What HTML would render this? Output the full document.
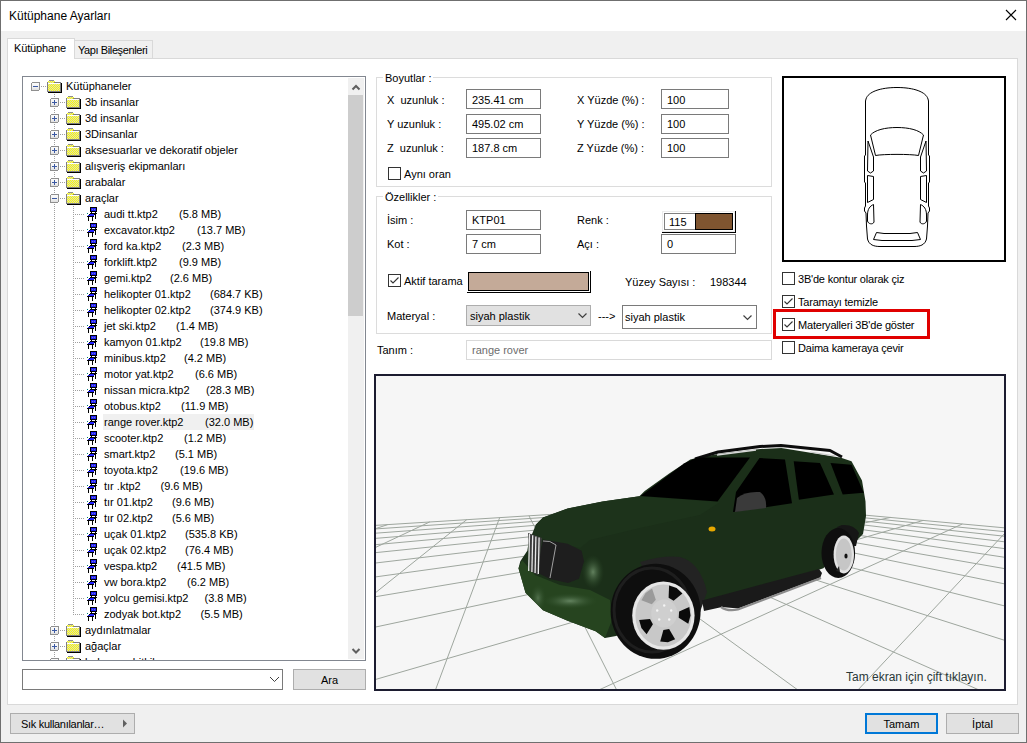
<!DOCTYPE html>
<html><head><meta charset="utf-8">
<style>
*{box-sizing:border-box;margin:0;padding:0}
html,body{width:1027px;height:743px;overflow:hidden;background:#f0f0f0;font-family:"Liberation Sans",sans-serif;color:#000}
.a{position:absolute}
.tt{position:absolute;font-size:11px;line-height:13px;white-space:pre}
.t12{position:absolute;font-size:12px;line-height:15px;white-space:pre}
.ic{position:absolute;shape-rendering:crispEdges}
.vd{position:absolute;width:1px;background-image:linear-gradient(#a0a0a0 50%,transparent 50%);background-size:1px 2px}
.hd{position:absolute;height:1px;background-image:linear-gradient(90deg,#a0a0a0 50%,transparent 50%);background-size:2px 1px}
.ed{position:absolute;background:#fff;border:1px solid #7a7a7a}
.btn{position:absolute;background:#e1e1e1;border:1px solid #adadad;font-size:12px;text-align:center}
.gb{position:absolute;border:1px solid #dcdcdc}
.cb{position:absolute;width:13px;height:13px;border:1px solid #333;background:#fff}
</style></head><body>
<svg width="0" height="0" style="position:absolute">
<defs>
<pattern id="dith" width="2" height="2" patternUnits="userSpaceOnUse"><rect width="2" height="2" fill="#d8d8c0"/><rect width="1" height="1" fill="#ffff00"/><rect x="1" y="1" width="1" height="1" fill="#ffff00"/></pattern>
<pattern id="bdith" width="2" height="2" patternUnits="userSpaceOnUse"><rect width="2" height="2" fill="#2020ff"/><rect width="1" height="1" fill="#8080c0"/></pattern>
<linearGradient id="bxg" x1="0" y1="0" x2="0" y2="1"><stop offset="0" stop-color="#fdfdfd"/><stop offset="0.6" stop-color="#f0f0f0"/><stop offset="1" stop-color="#dcdcdc"/></linearGradient>
<g id="fold">
 <rect x="2" y="0" width="5" height="1" fill="#909090"/>
 <rect x="1" y="1" width="7" height="2" fill="url(#dith)"/>
 <rect x="0" y="2" width="1" height="10" fill="#808080"/>
 <rect x="7" y="2" width="7" height="1" fill="#808080"/>
 <rect x="0" y="11" width="14" height="1" fill="#808080"/>
 <rect x="13" y="2" width="1" height="10" fill="#808080"/>
 <rect x="1" y="3" width="12" height="8" fill="url(#dith)"/>
 <rect x="1" y="3" width="12" height="1" fill="#fff"/>
 <rect x="14" y="3" width="1" height="10" fill="#000"/>
 <rect x="1" y="12" width="14" height="1" fill="#000"/>
</g>
<g id="minus">
 <rect x="0.5" y="0.5" width="8" height="8" rx="1.5" fill="url(#bxg)" stroke="#8f8f8f"/>
 <rect x="2" y="4" width="5" height="1" fill="#3b59a3"/>
</g>
<g id="plus">
 <rect x="0.5" y="0.5" width="8" height="8" rx="1.5" fill="url(#bxg)" stroke="#8f8f8f"/>
 <rect x="2" y="4" width="5" height="1" fill="#3b59a3"/>
 <rect x="4" y="2" width="1" height="5" fill="#3b59a3"/>
</g>
<g id="chair">
 <rect x="4" y="0" width="7" height="5" fill="#000"/>
 <rect x="5" y="1" width="5" height="3" fill="url(#bdith)"/>
 <rect x="5" y="5" width="1" height="1" fill="#000"/>
 <rect x="9" y="5" width="1" height="1" fill="#000"/>
 <rect x="4" y="6" width="7" height="1" fill="#000"/>
 <rect x="3" y="7" width="6" height="1" fill="#000"/>
 <rect x="4" y="7" width="4" height="1" fill="#2020ff"/>
 <rect x="2" y="8" width="6" height="1" fill="#2020ff"/>
 <rect x="1" y="9" width="7" height="1" fill="#000"/>
 <rect x="2" y="9" width="1" height="5" fill="#000"/>
 <rect x="6" y="9" width="1" height="5" fill="#000"/>
 <rect x="9" y="6" width="1" height="6" fill="#000"/>
 <rect x="1" y="6" width="1" height="1" fill="#008080"/>
</g>
</defs></svg>

<!-- window frame -->
<div class="a" style="left:0;top:0;width:1027px;height:743px;border:1px solid #6f6f6f"></div>
<div class="a" style="left:1px;top:1px;width:1025px;height:30px;background:#fff"></div>
<div class="t12" style="left:9px;top:9px">Kütüphane Ayarları</div>
<svg class="a" style="left:1005px;top:9px" width="12" height="12" viewBox="0 0 12 12"><path d="M1 1L11 11M11 1L1 11" stroke="#000" stroke-width="1.1"/></svg>

<!-- tabs -->
<div class="a" style="left:7px;top:58px;width:1011px;height:647px;background:#fff;border:1px solid #d9d9d9"></div>
<div class="a" style="left:74px;top:40px;width:79px;height:18px;background:#f0f0f0;border:1px solid #d9d9d9;border-bottom:none"></div>
<div class="a" style="left:7px;top:38px;width:68px;height:21px;background:#fff;border:1px solid #d9d9d9;border-bottom:none"></div>
<div class="tt" style="left:14px;top:42px;letter-spacing:-0.15px">Kütüphane</div>
<div class="tt" style="left:78px;top:44px;letter-spacing:-0.4px">Yapı Bileşenleri</div>

<!-- tree -->
<div class="a" style="left:22px;top:76px;width:344px;height:585px;border:1px solid #828790;background:#fff;overflow:hidden">
</div>
<div class="a" style="left:23px;top:77px;width:342px;height:583px;overflow:hidden">
<div class="a" style="left:-23px;top:-77px;width:400px;height:700px">
<div class="hd" style="left:41px;top:86px;width:6px"></div>
<div class="vd" style="left:54px;top:94px;height:568px"></div>
<div class="hd" style="left:60px;top:102px;width:6px"></div>
<div class="hd" style="left:60px;top:118px;width:6px"></div>
<div class="hd" style="left:60px;top:134px;width:6px"></div>
<div class="hd" style="left:60px;top:150px;width:6px"></div>
<div class="hd" style="left:60px;top:166px;width:6px"></div>
<div class="hd" style="left:60px;top:182px;width:6px"></div>
<div class="hd" style="left:60px;top:198px;width:6px"></div>
<div class="hd" style="left:60px;top:630px;width:6px"></div>
<div class="hd" style="left:60px;top:646px;width:6px"></div>
<div class="hd" style="left:60px;top:662px;width:6px"></div>
<div class="vd" style="left:73px;top:206px;height:409px"></div>
<div class="hd" style="left:75px;top:214px;width:10px"></div>
<div class="hd" style="left:75px;top:230px;width:10px"></div>
<div class="hd" style="left:75px;top:246px;width:10px"></div>
<div class="hd" style="left:75px;top:262px;width:10px"></div>
<div class="hd" style="left:75px;top:278px;width:10px"></div>
<div class="hd" style="left:75px;top:294px;width:10px"></div>
<div class="hd" style="left:75px;top:310px;width:10px"></div>
<div class="hd" style="left:75px;top:326px;width:10px"></div>
<div class="hd" style="left:75px;top:342px;width:10px"></div>
<div class="hd" style="left:75px;top:358px;width:10px"></div>
<div class="hd" style="left:75px;top:374px;width:10px"></div>
<div class="hd" style="left:75px;top:390px;width:10px"></div>
<div class="hd" style="left:75px;top:406px;width:10px"></div>
<div class="hd" style="left:75px;top:422px;width:10px"></div>
<div class="hd" style="left:75px;top:438px;width:10px"></div>
<div class="hd" style="left:75px;top:454px;width:10px"></div>
<div class="hd" style="left:75px;top:470px;width:10px"></div>
<div class="hd" style="left:75px;top:486px;width:10px"></div>
<div class="hd" style="left:75px;top:502px;width:10px"></div>
<div class="hd" style="left:75px;top:518px;width:10px"></div>
<div class="hd" style="left:75px;top:534px;width:10px"></div>
<div class="hd" style="left:75px;top:550px;width:10px"></div>
<div class="hd" style="left:75px;top:566px;width:10px"></div>
<div class="hd" style="left:75px;top:582px;width:10px"></div>
<div class="hd" style="left:75px;top:598px;width:10px"></div>
<div class="hd" style="left:75px;top:614px;width:10px"></div>
<svg class="ic" style="left:31px;top:82px" width="9" height="9" viewBox="0 0 9 9"><use href="#minus"/></svg>
<svg class="ic" style="left:47px;top:80px" width="16" height="14" viewBox="0 0 16 14"><use href="#fold"/></svg>
<div class="tt" style="left:66px;top:80px">Kütüphaneler</div>
<svg class="ic" style="left:50px;top:98px" width="9" height="9" viewBox="0 0 9 9"><use href="#plus"/></svg>
<svg class="ic" style="left:66px;top:96px" width="16" height="14" viewBox="0 0 16 14"><use href="#fold"/></svg>
<div class="tt" style="left:85px;top:96px">3b insanlar</div>
<svg class="ic" style="left:50px;top:114px" width="9" height="9" viewBox="0 0 9 9"><use href="#plus"/></svg>
<svg class="ic" style="left:66px;top:112px" width="16" height="14" viewBox="0 0 16 14"><use href="#fold"/></svg>
<div class="tt" style="left:85px;top:112px">3d insanlar</div>
<svg class="ic" style="left:50px;top:130px" width="9" height="9" viewBox="0 0 9 9"><use href="#plus"/></svg>
<svg class="ic" style="left:66px;top:128px" width="16" height="14" viewBox="0 0 16 14"><use href="#fold"/></svg>
<div class="tt" style="left:85px;top:128px">3Dinsanlar</div>
<svg class="ic" style="left:50px;top:146px" width="9" height="9" viewBox="0 0 9 9"><use href="#plus"/></svg>
<svg class="ic" style="left:66px;top:144px" width="16" height="14" viewBox="0 0 16 14"><use href="#fold"/></svg>
<div class="tt" style="left:85px;top:144px">aksesuarlar ve dekoratif objeler</div>
<svg class="ic" style="left:50px;top:162px" width="9" height="9" viewBox="0 0 9 9"><use href="#plus"/></svg>
<svg class="ic" style="left:66px;top:160px" width="16" height="14" viewBox="0 0 16 14"><use href="#fold"/></svg>
<div class="tt" style="left:85px;top:160px">alışveriş ekipmanları</div>
<svg class="ic" style="left:50px;top:178px" width="9" height="9" viewBox="0 0 9 9"><use href="#plus"/></svg>
<svg class="ic" style="left:66px;top:176px" width="16" height="14" viewBox="0 0 16 14"><use href="#fold"/></svg>
<div class="tt" style="left:85px;top:176px">arabalar</div>
<svg class="ic" style="left:50px;top:194px" width="9" height="9" viewBox="0 0 9 9"><use href="#minus"/></svg>
<svg class="ic" style="left:66px;top:192px" width="16" height="14" viewBox="0 0 16 14"><use href="#fold"/></svg>
<div class="tt" style="left:85px;top:192px">araçlar</div>
<svg class="ic" style="left:86px;top:207px" width="12" height="14" viewBox="0 0 12 14"><use href="#chair"/></svg>
<div class="tt" style="left:104px;top:208px">audi tt.ktp2</div>
<div class="tt" style="left:179px;top:208px">(5.8 MB)</div>
<svg class="ic" style="left:86px;top:223px" width="12" height="14" viewBox="0 0 12 14"><use href="#chair"/></svg>
<div class="tt" style="left:104px;top:224px">excavator.ktp2</div>
<div class="tt" style="left:197px;top:224px">(13.7 MB)</div>
<svg class="ic" style="left:86px;top:239px" width="12" height="14" viewBox="0 0 12 14"><use href="#chair"/></svg>
<div class="tt" style="left:104px;top:240px">ford ka.ktp2</div>
<div class="tt" style="left:182px;top:240px">(2.3 MB)</div>
<svg class="ic" style="left:86px;top:255px" width="12" height="14" viewBox="0 0 12 14"><use href="#chair"/></svg>
<div class="tt" style="left:104px;top:256px">forklift.ktp2</div>
<div class="tt" style="left:179px;top:256px">(9.9 MB)</div>
<svg class="ic" style="left:86px;top:271px" width="12" height="14" viewBox="0 0 12 14"><use href="#chair"/></svg>
<div class="tt" style="left:104px;top:272px">gemi.ktp2</div>
<div class="tt" style="left:170px;top:272px">(2.6 MB)</div>
<svg class="ic" style="left:86px;top:287px" width="12" height="14" viewBox="0 0 12 14"><use href="#chair"/></svg>
<div class="tt" style="left:104px;top:288px">helikopter 01.ktp2</div>
<div class="tt" style="left:210px;top:288px">(684.7 KB)</div>
<svg class="ic" style="left:86px;top:303px" width="12" height="14" viewBox="0 0 12 14"><use href="#chair"/></svg>
<div class="tt" style="left:104px;top:304px">helikopter 02.ktp2</div>
<div class="tt" style="left:210px;top:304px">(374.9 KB)</div>
<svg class="ic" style="left:86px;top:319px" width="12" height="14" viewBox="0 0 12 14"><use href="#chair"/></svg>
<div class="tt" style="left:104px;top:320px">jet ski.ktp2</div>
<div class="tt" style="left:176px;top:320px">(1.4 MB)</div>
<svg class="ic" style="left:86px;top:335px" width="12" height="14" viewBox="0 0 12 14"><use href="#chair"/></svg>
<div class="tt" style="left:104px;top:336px">kamyon 01.ktp2</div>
<div class="tt" style="left:200px;top:336px">(19.8 MB)</div>
<svg class="ic" style="left:86px;top:351px" width="12" height="14" viewBox="0 0 12 14"><use href="#chair"/></svg>
<div class="tt" style="left:104px;top:352px">minibus.ktp2</div>
<div class="tt" style="left:184px;top:352px">(4.2 MB)</div>
<svg class="ic" style="left:86px;top:367px" width="12" height="14" viewBox="0 0 12 14"><use href="#chair"/></svg>
<div class="tt" style="left:104px;top:368px">motor yat.ktp2</div>
<div class="tt" style="left:195px;top:368px">(6.6 MB)</div>
<svg class="ic" style="left:86px;top:383px" width="12" height="14" viewBox="0 0 12 14"><use href="#chair"/></svg>
<div class="tt" style="left:104px;top:384px">nissan micra.ktp2</div>
<div class="tt" style="left:206px;top:384px">(28.3 MB)</div>
<svg class="ic" style="left:86px;top:399px" width="12" height="14" viewBox="0 0 12 14"><use href="#chair"/></svg>
<div class="tt" style="left:104px;top:400px">otobus.ktp2</div>
<div class="tt" style="left:181px;top:400px">(11.9 MB)</div>
<div style="position:absolute;left:103px;top:414px;width:151px;height:16px;background:#f0f0f0"></div>
<svg class="ic" style="left:86px;top:415px" width="12" height="14" viewBox="0 0 12 14"><use href="#chair"/></svg>
<div class="tt" style="left:104px;top:416px">range rover.ktp2</div>
<div class="tt" style="left:205px;top:416px">(32.0 MB)</div>
<svg class="ic" style="left:86px;top:431px" width="12" height="14" viewBox="0 0 12 14"><use href="#chair"/></svg>
<div class="tt" style="left:104px;top:432px">scooter.ktp2</div>
<div class="tt" style="left:184px;top:432px">(1.2 MB)</div>
<svg class="ic" style="left:86px;top:447px" width="12" height="14" viewBox="0 0 12 14"><use href="#chair"/></svg>
<div class="tt" style="left:104px;top:448px">smart.ktp2</div>
<div class="tt" style="left:175px;top:448px">(5.1 MB)</div>
<svg class="ic" style="left:86px;top:463px" width="12" height="14" viewBox="0 0 12 14"><use href="#chair"/></svg>
<div class="tt" style="left:104px;top:464px">toyota.ktp2</div>
<div class="tt" style="left:180px;top:464px">(19.6 MB)</div>
<svg class="ic" style="left:86px;top:479px" width="12" height="14" viewBox="0 0 12 14"><use href="#chair"/></svg>
<div class="tt" style="left:104px;top:480px">tır .ktp2</div>
<div class="tt" style="left:160.5px;top:480px">(9.6 MB)</div>
<svg class="ic" style="left:86px;top:495px" width="12" height="14" viewBox="0 0 12 14"><use href="#chair"/></svg>
<div class="tt" style="left:104px;top:496px">tır 01.ktp2</div>
<div class="tt" style="left:172px;top:496px">(9.6 MB)</div>
<svg class="ic" style="left:86px;top:511px" width="12" height="14" viewBox="0 0 12 14"><use href="#chair"/></svg>
<div class="tt" style="left:104px;top:512px">tır 02.ktp2</div>
<div class="tt" style="left:172px;top:512px">(5.6 MB)</div>
<svg class="ic" style="left:86px;top:527px" width="12" height="14" viewBox="0 0 12 14"><use href="#chair"/></svg>
<div class="tt" style="left:104px;top:528px">uçak 01.ktp2</div>
<div class="tt" style="left:185px;top:528px">(535.8 KB)</div>
<svg class="ic" style="left:86px;top:543px" width="12" height="14" viewBox="0 0 12 14"><use href="#chair"/></svg>
<div class="tt" style="left:104px;top:544px">uçak 02.ktp2</div>
<div class="tt" style="left:185px;top:544px">(76.4 MB)</div>
<svg class="ic" style="left:86px;top:559px" width="12" height="14" viewBox="0 0 12 14"><use href="#chair"/></svg>
<div class="tt" style="left:104px;top:560px">vespa.ktp2</div>
<div class="tt" style="left:177px;top:560px">(41.5 MB)</div>
<svg class="ic" style="left:86px;top:575px" width="12" height="14" viewBox="0 0 12 14"><use href="#chair"/></svg>
<div class="tt" style="left:104px;top:576px">vw bora.ktp2</div>
<div class="tt" style="left:187px;top:576px">(6.2 MB)</div>
<svg class="ic" style="left:86px;top:591px" width="12" height="14" viewBox="0 0 12 14"><use href="#chair"/></svg>
<div class="tt" style="left:104px;top:592px">yolcu gemisi.ktp2</div>
<div class="tt" style="left:204.5px;top:592px">(3.8 MB)</div>
<svg class="ic" style="left:86px;top:607px" width="12" height="14" viewBox="0 0 12 14"><use href="#chair"/></svg>
<div class="tt" style="left:104px;top:608px">zodyak bot.ktp2</div>
<div class="tt" style="left:200.6px;top:608px">(5.5 MB)</div>
<svg class="ic" style="left:50px;top:626px" width="9" height="9" viewBox="0 0 9 9"><use href="#plus"/></svg>
<svg class="ic" style="left:66px;top:624px" width="16" height="14" viewBox="0 0 16 14"><use href="#fold"/></svg>
<div class="tt" style="left:85px;top:624px">aydınlatmalar</div>
<svg class="ic" style="left:50px;top:642px" width="9" height="9" viewBox="0 0 9 9"><use href="#plus"/></svg>
<svg class="ic" style="left:66px;top:640px" width="16" height="14" viewBox="0 0 16 14"><use href="#fold"/></svg>
<div class="tt" style="left:85px;top:640px">ağaçlar</div>
<svg class="ic" style="left:50px;top:658px" width="9" height="9" viewBox="0 0 9 9"><use href="#plus"/></svg>
<svg class="ic" style="left:66px;top:656px" width="16" height="14" viewBox="0 0 16 14"><use href="#fold"/></svg>
<div class="tt" style="left:85px;top:656px">bahçe ve bitkiler</div>
</div>
</div>
<!-- scrollbar -->
<div class="a" style="left:348px;top:78px;width:16px;height:581px;background:#f0f0f0"></div>
<div class="a" style="left:348px;top:95px;width:15px;height:221px;background:#cdcdcd"></div>
<svg class="a" style="left:350px;top:82px" width="12" height="10" viewBox="0 0 12 10"><path d="M2.5 7.5L6 4L9.5 7.5" stroke="#606060" stroke-width="2" fill="none"/></svg>
<svg class="a" style="left:350px;top:646px" width="12" height="10" viewBox="0 0 12 10"><path d="M2.5 3L6 6.5L9.5 3" stroke="#606060" stroke-width="2" fill="none"/></svg>

<!-- search combo + Ara -->
<div class="ed" style="left:22px;top:669px;width:261px;height:21px"></div>
<svg class="a" style="left:269px;top:675px" width="11" height="8" viewBox="0 0 11 8"><path d="M1 2L5.5 6.5L10 2" stroke="#404040" stroke-width="1" fill="none"/></svg>
<div class="btn" style="left:293px;top:669px;width:73px;height:21px;line-height:20px;font-size:11px">Ara</div>

<!-- Boyutlar group -->
<div class="gb" style="left:376px;top:77px;width:396px;height:110px"></div>
<div class="tt" style="left:383px;top:72px;background:#fff;padding:0 2px">Boyutlar :</div>
<div class="tt" style="left:387px;top:94px">X  uzunluk :</div>
<div class="tt" style="left:387px;top:118px">Y uzunluk :</div>
<div class="tt" style="left:387px;top:142px">Z  uzunluk :</div>
<div class="ed" style="left:466px;top:89px;width:75px;height:20px"></div>
<div class="ed" style="left:466px;top:114px;width:75px;height:20px"></div>
<div class="ed" style="left:466px;top:138px;width:75px;height:20px"></div>
<div class="tt" style="left:472px;top:94px">235.41 cm</div>
<div class="tt" style="left:472px;top:118px">495.02 cm</div>
<div class="tt" style="left:472px;top:142px">187.8 cm</div>
<div class="tt" style="left:577px;top:94px">X Yüzde (%) :</div>
<div class="tt" style="left:577px;top:118px">Y Yüzde (%) :</div>
<div class="tt" style="left:577px;top:142px">Z Yüzde (%) :</div>
<div class="ed" style="left:661px;top:89px;width:68px;height:20px"></div>
<div class="ed" style="left:661px;top:114px;width:68px;height:20px"></div>
<div class="ed" style="left:661px;top:138px;width:68px;height:20px"></div>
<div class="tt" style="left:667px;top:94px">100</div>
<div class="tt" style="left:667px;top:118px">100</div>
<div class="tt" style="left:667px;top:142px">100</div>
<div class="cb" style="left:388px;top:167px"></div>
<div class="tt" style="left:404px;top:168px">Aynı oran</div>

<!-- Ozellikler group -->
<div class="gb" style="left:376px;top:196px;width:396px;height:138px"></div>
<div class="tt" style="left:383px;top:191px;background:#fff;padding:0 2px">Özellikler :</div>
<div class="tt" style="left:387px;top:214px">İsim :</div>
<div class="tt" style="left:387px;top:238px">Kot :</div>
<div class="ed" style="left:466px;top:210px;width:75px;height:20px"></div>
<div class="ed" style="left:466px;top:234px;width:75px;height:20px"></div>
<div class="tt" style="left:472px;top:214px">KTP01</div>
<div class="tt" style="left:472px;top:238px">7 cm</div>
<div class="tt" style="left:577px;top:214px">Renk :</div>
<div class="tt" style="left:577px;top:238px">Açı :</div>
<div class="a" style="left:662px;top:211px;width:73px;height:21px;border:1px solid #ececec;background:#fff"></div>
<div class="a" style="left:664px;top:213px;width:69px;height:17px;border:1px solid #808080;background:#fff"></div>
<div class="a" style="left:695px;top:213px;width:38px;height:17px;background:#7f5530;border:1px solid #000"></div>
<div class="a" style="left:735px;top:211px;width:1px;height:22px;background:#000"></div>
<div class="a" style="left:662px;top:232px;width:74px;height:1px;background:#000"></div>
<div class="tt" style="left:669px;top:216px">115</div>
<div class="ed" style="left:661px;top:234px;width:75px;height:20px"></div>
<div class="tt" style="left:667px;top:238px">0</div>
<div class="cb" style="left:388px;top:274px"></div>
<svg class="a" style="left:389px;top:275px" width="11" height="11" viewBox="0 0 11 11"><path d="M1.5 5.5L4 8L9.5 2.5" stroke="#333" stroke-width="1.1" fill="none"/></svg>
<div class="tt" style="left:404px;top:275px">Aktif tarama</div>
<div class="a" style="left:468px;top:272px;width:121px;height:19px;border:1px solid #000;background:#c4aa98"></div>
<div class="a" style="left:590px;top:271px;width:1px;height:22px;background:#000"></div>
<div class="a" style="left:467px;top:292px;width:124px;height:1px;background:#000"></div>
<div class="tt" style="left:625px;top:276px">Yüzey Sayısı :</div>
<div class="tt" style="left:710px;top:276px">198344</div>
<div class="tt" style="left:387px;top:310px">Materyal :</div>
<div class="a" style="left:466px;top:305px;width:125px;height:21px;background:#e1e1e1;border:1px solid #adadad"></div>
<div class="tt" style="left:470px;top:310px">siyah plastik</div>
<svg class="a" style="left:577px;top:312px" width="11" height="8" viewBox="0 0 11 8"><path d="M1.5 1.5L5.5 5.5L9.5 1.5" stroke="#404040" stroke-width="1.2" fill="none"/></svg>
<div class="tt" style="left:598px;top:310px">---&gt;</div>
<div class="ed" style="left:622px;top:305px;width:135px;height:24px"></div>
<div class="tt" style="left:625px;top:311px">siyah plastik</div>
<svg class="a" style="left:742px;top:314px" width="11" height="8" viewBox="0 0 11 8"><path d="M1.5 1.5L5.5 5.5L9.5 1.5" stroke="#404040" stroke-width="1.2" fill="none"/></svg>

<div class="tt" style="left:377px;top:344px">Tanım :</div>
<div class="a" style="left:466px;top:340px;width:306px;height:20px;border:1px solid #d9d9d9;background:#fff"></div>
<div class="tt" style="left:472px;top:344px;color:#6d6d6d">range rover</div>

<!-- top view box -->
<div class="a" style="left:782px;top:76px;width:224px;height:186px;border:2px solid #000;background:#fff"></div>
<svg class="a" style="left:782px;top:76px" width="224" height="186" viewBox="782 76 224 186">
<g fill="none" stroke="#000" stroke-width="1"><path d="M897 87.5 C880 87.5 868 92 866 99 L865.5 101 L865.5 155 L864.5 156 L864.5 182 L865.5 183 L865.5 206 L864.5 208 L864.5 211 L866 213 L866.5 226 L867.5 239 C869 245 874 246.5 880 246.5 L914 246.5 C920 246.5 925 245 926.5 239 L927.5 226 L928 213 L929.5 211 L929.5 208 L928.5 206 L928.5 183 L929.5 182 L929.5 156 L928.5 155 L928.5 101 L928 99 C926 92 914 87.5 897 87.5 Z"/><path d="M870.5 135 C875 130 885 127.5 897 127.5 C909 127.5 919 130 923.5 135 L923 137 L918.5 155.5 C911 154 883 154 875.5 155.5 L871 137 Z"/><path d="M868,141 L873.5,157 L873.5,171 L870.5,173 L867.5,171 Z"/><path d="M926,141 L920.5,157 L920.5,171 L923.5,173 L926.5,171 Z"/><path d="M867.5,175.5 L873.5,176.5 L873.5,199.5 L867.5,202.5 Z"/><path d="M926.5,175.5 L920.5,176.5 L920.5,199.5 L926.5,202.5 Z"/><path d="M873.5 204.5 C870 206 867.5 209 867.5 215 L867.5 221 C868 224 873 225 874 222 Z"/><path d="M920.5 204.5 C924 206 926.5 209 926.5 215 L926.5 221 C926 224 921 225 920 222 Z"/><path d="M876.5,232.5 L884,233.5 L910,233.5 L917.5,232.5 L920.5,239.5 L912,240.5 L882,240.5 L873.5,239.5 Z"/></g>
</svg>

<!-- right checkboxes -->
<div class="cb" style="left:782px;top:272px"></div>
<div class="tt" style="left:798px;top:273px;letter-spacing:-0.2px">3B'de kontur olarak çiz</div>
<div class="cb" style="left:782px;top:295px"></div>
<svg class="a" style="left:783px;top:296px" width="11" height="11" viewBox="0 0 11 11"><path d="M1.5 5.5L4 8L9.5 2.5" stroke="#333" stroke-width="1.1" fill="none"/></svg>
<div class="tt" style="left:798px;top:296px;letter-spacing:-0.2px">Taramayı temizle</div>
<div class="cb" style="left:782px;top:318px"></div>
<svg class="a" style="left:783px;top:319px" width="11" height="11" viewBox="0 0 11 11"><path d="M1.5 5.5L4 8L9.5 2.5" stroke="#333" stroke-width="1.1" fill="none"/></svg>
<div class="tt" style="left:798px;top:319px;letter-spacing:-0.2px">Materyalleri 3B'de göster</div>
<div class="cb" style="left:782px;top:341px"></div>
<div class="tt" style="left:798px;top:342px;letter-spacing:-0.2px">Daima kameraya çevir</div>
<div class="a" style="left:773px;top:309px;width:157px;height:30px;border:3px solid #e00000"></div>

<!-- 3D view -->
<div class="a" style="left:374px;top:374px;width:632px;height:317px;border:2px solid #1c1c30;background:#f6f6f6;overflow:hidden">
<svg class="a" style="left:0;top:0" width="628" height="313" viewBox="376 376 628 313">
<g stroke="#9ea69e" stroke-width="1" fill="none"><line x1="8253.6" y1="5081.1" x2="1141.0" y2="540.2"/><line x1="2642.4" y1="5529.9" x2="1067.5" y2="533.5"/><line x1="-4188.2" y1="6076.3" x2="1009.4" y2="528.3"/><line x1="-7328.7" y1="4310.2" x2="962.3" y2="524.0"/><line x1="-13180.9" y1="4616.2" x2="923.3" y2="520.4"/><line x1="-20055.7" y1="4975.7" x2="890.6" y2="517.4"/><line x1="-28246.7" y1="5404.0" x2="862.7" y2="514.9"/><line x1="-38172.0" y1="5923.0" x2="838.6" y2="512.7"/><line x1="-30724.6" y1="4235.7" x2="817.6" y2="510.8"/><line x1="-38308.9" y1="4530.0" x2="799.2" y2="509.1"/><line x1="-47190.9" y1="4874.7" x2="782.9" y2="507.6"/><line x1="-3934.4" y1="890.3" x2="768.3" y2="506.3"/><line x1="-1769.3" y1="692.0" x2="755.2" y2="505.1"/><line x1="-1022.1" y1="623.6" x2="743.4" y2="504.0"/><line x1="-643.5" y1="588.9" x2="732.7" y2="503.1"/><line x1="1849.8" y1="604.8" x2="732.7" y2="503.1"/><line x1="2046.0" y1="634.7" x2="722.0" y2="503.7"/><line x1="2370.0" y1="684.1" x2="710.5" y2="504.4"/><line x1="3007.2" y1="781.2" x2="698.3" y2="505.2"/><line x1="4836.7" y1="1060.0" x2="685.1" y2="506.0"/><line x1="31119.3" y1="5104.9" x2="670.9" y2="506.9"/><line x1="21995.2" y1="4219.6" x2="655.5" y2="507.9"/><line x1="23266.1" y1="5149.4" x2="638.9" y2="508.9"/><line x1="15582.4" y1="4248.2" x2="620.7" y2="510.0"/><line x1="15252.1" y1="5194.8" x2="601.0" y2="511.3"/><line x1="9063.8" y1="4277.4" x2="579.3" y2="512.6"/><line x1="7072.3" y1="5241.1" x2="555.4" y2="514.1"/><line x1="2436.8" y1="4307.0" x2="529.0" y2="515.8"/><line x1="-1278.3" y1="5288.5" x2="499.7" y2="517.6"/><line x1="-4301.2" y1="4337.1" x2="466.8" y2="519.6"/><line x1="-9805.3" y1="5336.8" x2="429.8" y2="521.9"/><line x1="-11153.2" y1="4367.8" x2="387.7" y2="524.6"/><line x1="-18514.3" y1="5386.1" x2="339.6" y2="527.6"/><line x1="-18122.0" y1="4398.9" x2="284.0" y2="531.0"/><line x1="-27411.1" y1="5436.5" x2="218.9" y2="535.1"/><line x1="-25210.6" y1="4430.6" x2="141.7" y2="539.9"/><line x1="-36502.0" y1="5488.0" x2="48.8" y2="545.7"/><line x1="-32422.2" y1="4462.9" x2="-65.2" y2="552.8"/><line x1="-45793.3" y1="5540.7" x2="-208.5" y2="561.8"/><line x1="-39759.9" y1="4495.7" x2="-394.0" y2="573.3"/><line x1="-55291.8" y1="5594.5" x2="-643.5" y2="588.9"/></g><polygon points="518.5,568.2 525.5,592.7 543.0,610.3 567.6,620.8 595.6,631.3 605.0,638.0 616.0,636.0 700.0,605.0 704.0,602.0 818.0,570.0 823.4,568.2 830.0,560.0 857.0,540.0 863.0,534.0 866.0,516.0 865.5,501.6 862.0,480.6 851.5,461.3 841.0,457.8 781.4,448.0 760.4,449.0 718.3,454.0 697.3,457.8 690.3,459.5 669.2,473.6 644.7,491.1 639.4,496.3 602.6,501.6 567.6,508.6 543.0,517.4 536.0,524.4 532.5,533.1 529.0,540.2 527.3,550.7 520.3,561.2" fill="#1b2f19"/><polygon points="536.0,524.4 543.0,517.4 567.6,508.6 602.6,501.6 639.4,496.3 720.0,502.0 700.0,515.0 640.0,528.0 590.0,540.0 580.0,548.0 548.0,541.0 533.0,536.0" fill="#1d331b"/><polygon points="518.5,568.2 525.5,592.7 543.0,610.3 567.6,620.8 595.6,631.3 605.0,638.0 612.0,620.0 610.0,600.0 590.0,590.0 560.0,585.0 535.0,575.0 522.0,560.0" fill="#26441f"/><path d="M695 459 L718 452 L760 446.5 L781 445.5 L830 450.5 L842 457" stroke="#0c0c0c" stroke-width="3" fill="none" stroke-linejoin="round"/><path d="M717 455 L756 450" stroke="#d8d8d8" stroke-width="1.3"/><path d="M810 452 L836 456" stroke="#c8c8c8" stroke-width="1.2"/><polygon points="640.5,496.0 684.5,463.2 697.0,457.5 750.0,457.5 717.5,501.5" fill="#000"/><polygon points="733.0,512.0 736.0,492.0 759.5,458.0 785.0,459.5 792.0,503.3 767.4,506.9" fill="#000"/><path d="M735 512 L737 498 Q745 491 760 492 Q767 497 766 508 Z" fill="#3a3a3a"/><polygon points="793.7,461.3 820.0,463.0 834.0,494.6 798.9,499.8" fill="#000"/><polygon points="830.5,463.0 851.5,464.8 863.8,492.8 842.7,494.6" fill="#000"/><polygon points="543.0,539.5 567.6,543.7 581.6,550.7 584.0,561.2 579.0,578.7 568.0,583.0 550.0,579.0 538.0,573.0 540.0,554.2" fill="#1e1e1e"/><polygon points="528.0,533.0 542.0,538.0 538.0,575.0 530.0,571.0" fill="#3a3a3a"/><path d="M529.5 534.0 L528.7 571.0" stroke="#e8e8e8" stroke-width="1.3"/><path d="M532.7 535.2 L531.9 572.0" stroke="#e8e8e8" stroke-width="1.3"/><path d="M535.9 536.4 L535.1 573.0" stroke="#e8e8e8" stroke-width="1.3"/><path d="M539.1 537.6 L538.3 574.0" stroke="#e8e8e8" stroke-width="1.3"/><path d="M543 541 Q550 540 556 545 L550 578" stroke="#c0c0c0" stroke-width="0.8" fill="none"/><defs><radialGradient id="hlg"><stop offset="0" stop-color="#6a8a66" stop-opacity="0.9"/><stop offset="1" stop-color="#2a4a26" stop-opacity="0"/></radialGradient><clipPath id="bclip"><polygon points="518.5,568.2 525.5,592.7 543.0,610.3 567.6,620.8 595.6,631.3 605.0,638.0 616.0,636.0 700.0,605.0 704.0,602.0 818.0,570.0 823.4,568.2 830.0,560.0 857.0,540.0 863.0,534.0 866.0,516.0 865.5,501.6 862.0,480.6 851.5,461.3 841.0,457.8 781.4,448.0 760.4,449.0 718.3,454.0 697.3,457.8 690.3,459.5 669.2,473.6 644.7,491.1 639.4,496.3 602.6,501.6 567.6,508.6 543.0,517.4 536.0,524.4 532.5,533.1 529.0,540.2 527.3,550.7 520.3,561.2"/></clipPath></defs><g clip-path="url(#bclip)"><ellipse cx="593" cy="572" rx="11" ry="17" fill="url(#hlg)"/><ellipse cx="570" cy="601" rx="28" ry="8" fill="url(#hlg)"/><ellipse cx="538" cy="598" rx="8" ry="14" fill="url(#hlg)" opacity="0.7"/></g><path d="M640 562 Q665 555 680 557 Q700 562 707 592 L700 612 L660 600 Z" fill="#232323"/><polygon points="702.0,600.5 819.0,569.0 822.0,573.0 820.3,577.5 738.0,608.5 722.0,607.0 704.0,611.0" fill="#1a1a1a"/><path d="M721 607 Q727 611.5 738 609.5 L821 578" stroke="#8c8c8c" stroke-width="2.2" fill="none"/><path d="M826 548 Q829 529 842 525 Q854 524 859 533 L856 546 Z" fill="#161616"/><ellipse cx="838.3" cy="553" rx="16.8" ry="25" fill="#0e0e0e"/><ellipse cx="843.8" cy="554.5" rx="10.2" ry="18.9" fill="#e2e2e2"/><ellipse cx="843.8" cy="554.5" rx="8" ry="16" fill="#c6c6c6"/><ellipse cx="846" cy="556" rx="1.6" ry="2.6" fill="#111"/><path d="M839 566 L836 571 L840 572 Z" fill="#222"/><ellipse cx="655.6" cy="611.3" rx="45" ry="47.5" fill="#0e0e0e"/><ellipse cx="652" cy="610" rx="38" ry="42" fill="none" stroke="#1e1e1e" stroke-width="3"/><ellipse cx="663.4" cy="615.6" rx="31.2" ry="34.2" fill="#e6e6e6"/><ellipse cx="663.4" cy="615.6" rx="28" ry="31" fill="#c8c8c8"/><polygon points="668.6,597.7 669.1,585.6 676.6,587.9 682.4,593.4 673.6,600.7" fill="#0a0a0a"/><polygon points="679.1,611.5 689.3,607.1 690.5,615.5 688.3,623.7 678.7,617.8" fill="#0a0a0a"/><polygon points="669.1,629.1 675.1,639.2 667.9,642.2 660.2,641.5 663.4,630.0" fill="#0a0a0a"/><polygon points="652.9,624.3 646.6,634.3 641.4,628.0 639.1,619.9 650.0,618.9" fill="#0a0a0a"/><polygon points="651.8,604.3 641.4,600.2 645.6,593.0 652.1,588.4 655.8,599.8" fill="#9a9a9a"/><ellipse cx="664.2" cy="613.5" rx="13" ry="14" fill="#cfcfcf"/><circle cx="664.2" cy="605.5" r="1.2" fill="#f4f4f4"/><circle cx="671.2" cy="610.5" r="1.2" fill="#f4f4f4"/><circle cx="669.2" cy="619.5" r="1.2" fill="#f4f4f4"/><circle cx="659.2" cy="619.5" r="1.2" fill="#f4f4f4"/><circle cx="657.2" cy="610.5" r="1.2" fill="#f4f4f4"/><ellipse cx="712" cy="529" rx="3.5" ry="2.5" fill="#e8a800"/>
</svg>
</div>
<div class="t12" style="left:846px;top:670px;color:#2a3838">Tam ekran için çift tıklayın.</div>

<!-- bottom buttons -->
<div class="btn" style="left:10px;top:713px;width:125px;height:21px;line-height:20px;text-align:left;padding-left:10px;font-size:11px;letter-spacing:-0.3px">Sık kullanılanlar…</div>
<svg class="a" style="left:122px;top:719px" width="6" height="9" viewBox="0 0 6 9"><path d="M1 0.5L5 4.5L1 8.5Z" fill="#606060"/></svg>
<div class="btn" style="left:865px;top:713px;width:73px;height:21px;line-height:18px;border:2px solid #0078d7;font-size:11px">Tamam</div>
<div class="btn" style="left:946px;top:713px;width:73px;height:21px;line-height:20px;font-size:11px">İptal</div>
</body></html>
